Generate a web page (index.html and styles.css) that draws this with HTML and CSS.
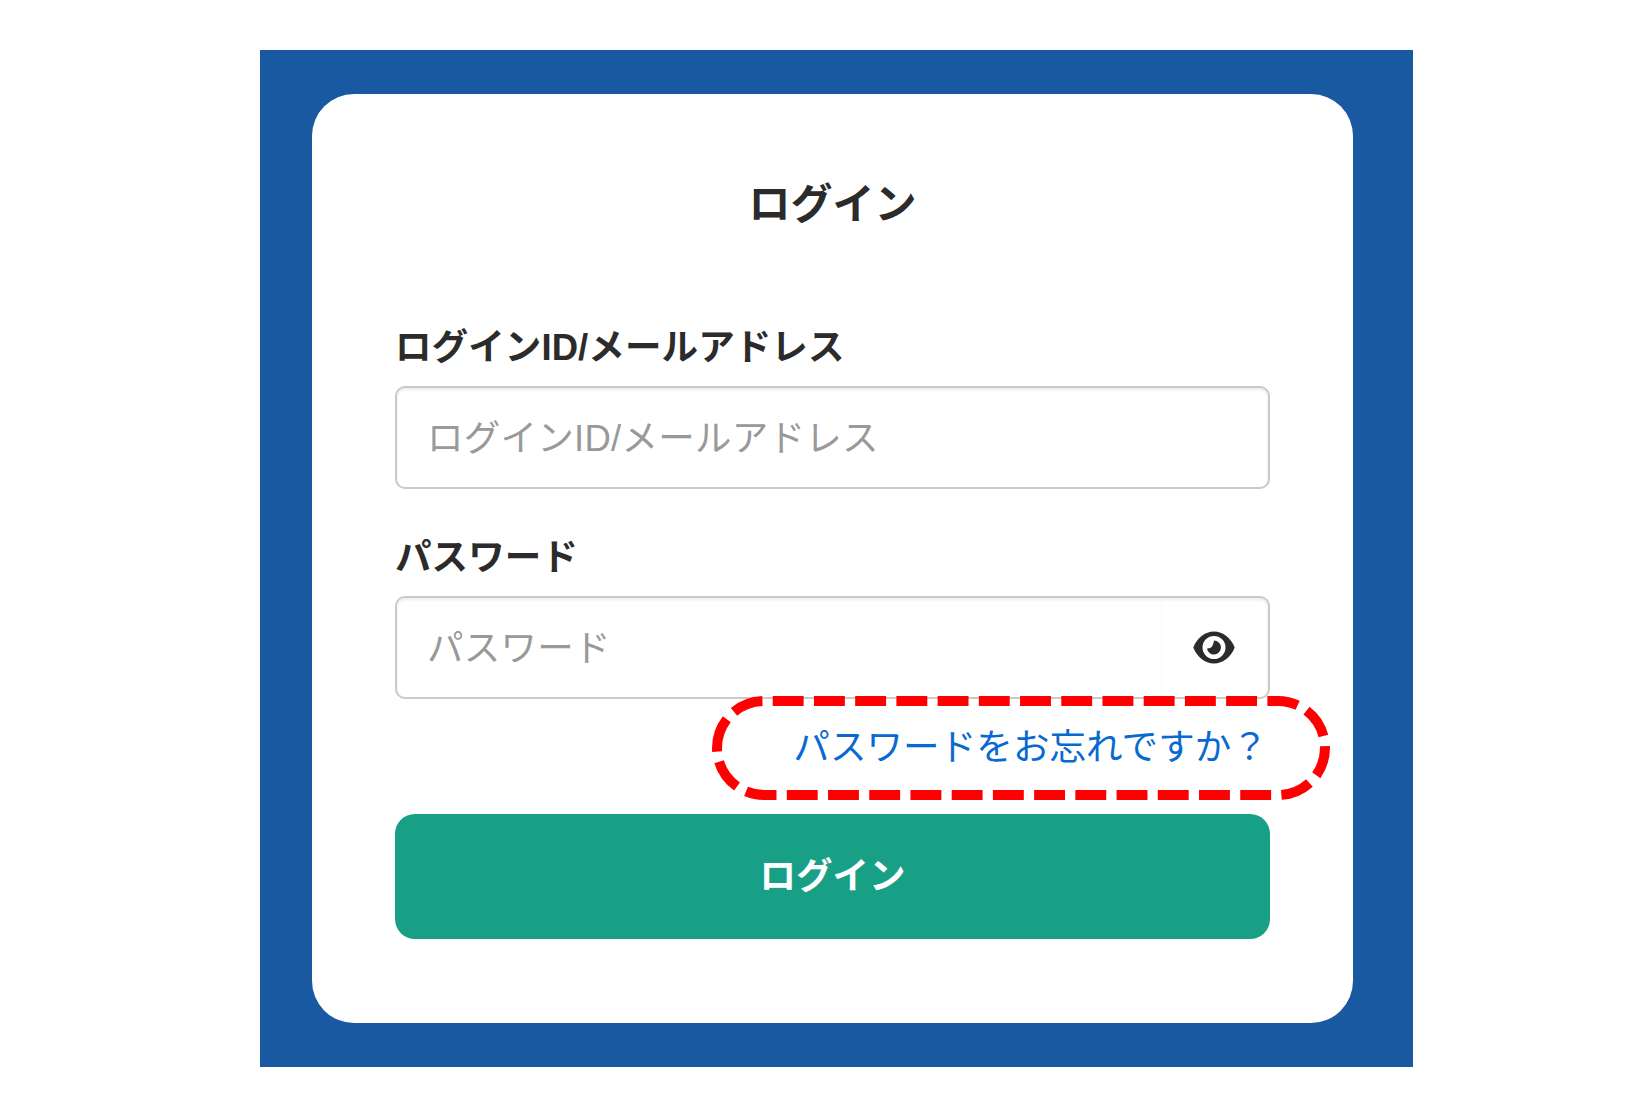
FILE: index.html
```html
<!DOCTYPE html>
<html lang="ja">
<head>
    <meta charset="UTF-8">
    <meta name="viewport" content="width=device-width, initial-scale=1.0">
    <title>ログイン</title>
    <link rel="stylesheet" href="styles.css">
</head>
<body>
    <div class="login-page">
        <form class="login-card">
            <h1>ログイン</h1>

            <!-- Login ID -->
            <label for="login-id">ログインID/メールアドレス</label>
            <div class="field">
                <input type="text" id="login-id" placeholder="ログインID/メールアドレス">
            </div>

            <!-- Password -->
            <label for="password">パスワード</label>
            <div class="field">
                <input type="password" id="password" placeholder="パスワード">
                <button type="button" class="toggle-password" aria-label="パスワードを表示">
                    <svg class="eye-icon" viewBox="0 0 42 33">
                        <path fill-rule="evenodd" d="M0.3 16.5C4 7 12 0.5 21 0.5S38 7 41.7 16.5C38 26 30 32.5 21 32.5S4 26 0.3 16.5ZM21 5A11.5 11.5 0 1 0 21 28A11.5 11.5 0 1 0 21 5Z"/>
                        <path d="M21 9.5A7 7 0 1 1 14 17.5Q20 18 21 9.5Z"/>
                    </svg>
                </button>
            </div>

            <div class="forgot">
                <a href="#">パスワードをお忘れですか？</a>
                <!-- Dashed highlight around the link -->
                <svg class="highlight" viewBox="0 0 618 104">
                    <path d="M5 52A47 47 0 0 1 52 5H566A47 47 0 0 1 566 99H52A47 47 0 0 1 5 52"/>
                </svg>
            </div>

            <button type="submit" class="login-button">ログイン</button>
        </form>
    </div>
</body>
</html>
```
FILE: styles.css
```css
* {
    box-sizing: border-box;
}

body {
    margin: 0;
    padding: 50px 223px 39px 260px;
    font-family: "Liberation Sans", "Noto Sans CJK JP", sans-serif;
    font-size: 36.5px;
    color: #2b2b2b;
    background: white;
}

.login-page {
    height: 1017px;
    padding: 44px 60px 44px 52px;
    background: #1959a1;
}

.login-card {
    display: flex;
    flex-direction: column;
    height: 929px;
    padding: 81px 83px 0;
    border-radius: 42px;
    background: white;
}

h1 {
    margin: 0 0 88px;
    font-size: 42px;
    line-height: 60px;
    text-align: center;
}

label {
    margin-bottom: 13px;
    font-weight: bold;
    line-height: 50px;
    letter-spacing: 0.1px;
}

/* Inputs */
.field {
    display: flex;
    flex-shrink: 0;
    height: 103px;
    margin-bottom: 44px;
    border: 2px solid #cacaca;
    border-radius: 10px;
    box-shadow: inset 0 2px 3px rgba(0, 0, 0, 0.08);
}

input {
    flex: 1;
    min-width: 0;
    padding: 2px 0 0 30px;
    border: none;
    outline: none;
    font: inherit;
    letter-spacing: 0.25px;
    background: transparent;
}

input::placeholder {
    color: #999;
    opacity: 1;
}

.toggle-password {
    display: flex;
    align-items: center;
    justify-content: center;
    width: 107px;
    padding: 0 3px 0 0;
    border: none;
    border-left: 1px solid #fafafa;
    background: transparent;
}

.eye-icon {
    width: 42px;
    height: 33px;
    fill: #2b2b2b;
}

/* Forgotten password link */
.forgot {
    position: relative;
    margin: -20px 0 41px;
    padding-right: 2px;
    line-height: 50px;
    text-align: right;
}

.forgot a {
    color: #0869d1;
    letter-spacing: 0.1px;
    text-decoration: none;
}

.highlight {
    position: absolute;
    top: -27px;
    right: -60px;
    width: 618px;
    height: 104px;
    pointer-events: none;
}

.highlight path {
    fill: none;
    stroke: red;
    stroke-width: 10;
    stroke-dasharray: 30.9 10.32;
}

.login-button {
    height: 125px;
    padding-bottom: 7px;
    border: none;
    border-radius: 20px;
    font: inherit;
    font-weight: bold;
    color: white;
    background: #18a086;
}
```
